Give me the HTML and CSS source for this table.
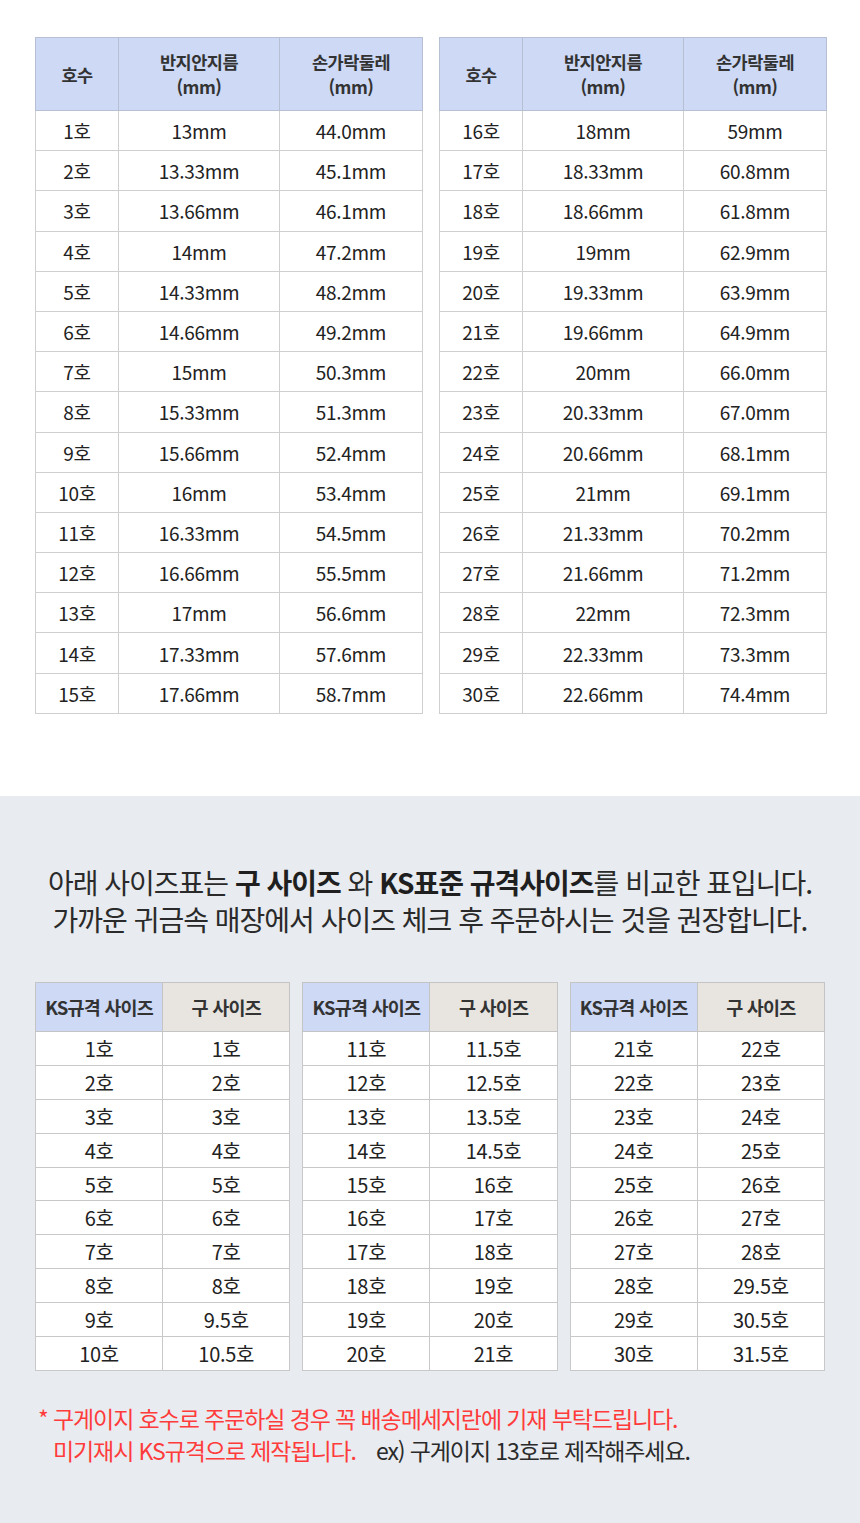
FILE: index.html
```html
<!DOCTYPE html>
<html lang="ko">
<head>
<meta charset="utf-8">
<link rel="stylesheet" href="styles.css">
</head>
<body>
<section class="top">
  <table class="size">
    <colgroup><col class="c1"><col class="c2"><col class="c3"></colgroup>
    <thead><tr><th>호수</th><th><span class="hl">반지안지름</span><span class="hl">(mm)</span></th><th><span class="hl">손가락둘레</span><span class="hl">(mm)</span></th></tr></thead>
    <tbody>
      <tr><td>1호</td><td>13mm</td><td>44.0mm</td></tr>
      <tr><td>2호</td><td>13.33mm</td><td>45.1mm</td></tr>
      <tr><td>3호</td><td>13.66mm</td><td>46.1mm</td></tr>
      <tr><td>4호</td><td>14mm</td><td>47.2mm</td></tr>
      <tr><td>5호</td><td>14.33mm</td><td>48.2mm</td></tr>
      <tr><td>6호</td><td>14.66mm</td><td>49.2mm</td></tr>
      <tr><td>7호</td><td>15mm</td><td>50.3mm</td></tr>
      <tr><td>8호</td><td>15.33mm</td><td>51.3mm</td></tr>
      <tr><td>9호</td><td>15.66mm</td><td>52.4mm</td></tr>
      <tr><td>10호</td><td>16mm</td><td>53.4mm</td></tr>
      <tr><td>11호</td><td>16.33mm</td><td>54.5mm</td></tr>
      <tr><td>12호</td><td>16.66mm</td><td>55.5mm</td></tr>
      <tr><td>13호</td><td>17mm</td><td>56.6mm</td></tr>
      <tr><td>14호</td><td>17.33mm</td><td>57.6mm</td></tr>
      <tr><td>15호</td><td>17.66mm</td><td>58.7mm</td></tr>
    </tbody>
  </table>
  <table class="size">
    <colgroup><col class="c1"><col class="c2"><col class="c3"></colgroup>
    <thead><tr><th>호수</th><th><span class="hl">반지안지름</span><span class="hl">(mm)</span></th><th><span class="hl">손가락둘레</span><span class="hl">(mm)</span></th></tr></thead>
    <tbody>
      <tr><td>16호</td><td>18mm</td><td>59mm</td></tr>
      <tr><td>17호</td><td>18.33mm</td><td>60.8mm</td></tr>
      <tr><td>18호</td><td>18.66mm</td><td>61.8mm</td></tr>
      <tr><td>19호</td><td>19mm</td><td>62.9mm</td></tr>
      <tr><td>20호</td><td>19.33mm</td><td>63.9mm</td></tr>
      <tr><td>21호</td><td>19.66mm</td><td>64.9mm</td></tr>
      <tr><td>22호</td><td>20mm</td><td>66.0mm</td></tr>
      <tr><td>23호</td><td>20.33mm</td><td>67.0mm</td></tr>
      <tr><td>24호</td><td>20.66mm</td><td>68.1mm</td></tr>
      <tr><td>25호</td><td>21mm</td><td>69.1mm</td></tr>
      <tr><td>26호</td><td>21.33mm</td><td>70.2mm</td></tr>
      <tr><td>27호</td><td>21.66mm</td><td>71.2mm</td></tr>
      <tr><td>28호</td><td>22mm</td><td>72.3mm</td></tr>
      <tr><td>29호</td><td>22.33mm</td><td>73.3mm</td></tr>
      <tr><td>30호</td><td>22.66mm</td><td>74.4mm</td></tr>
    </tbody>
  </table>
</section>

<section class="compare">
  <p class="intro">아래 사이즈표는 <b>구 사이즈</b> 와 <b>KS표준 규격사이즈</b>를 비교한 표입니다.<br>가까운 귀금속 매장에서 사이즈 체크 후 주문하시는 것을 권장합니다.</p>

  <div class="ks-tables">
    <table class="ks">
      <colgroup><col class="half"><col class="half"></colgroup>
      <thead><tr><th class="blue">KS규격 사이즈</th><th class="beige">구 사이즈</th></tr></thead>
      <tbody>
        <tr><td>1호</td><td>1호</td></tr>
        <tr><td>2호</td><td>2호</td></tr>
        <tr><td>3호</td><td>3호</td></tr>
        <tr><td>4호</td><td>4호</td></tr>
        <tr><td>5호</td><td>5호</td></tr>
        <tr><td>6호</td><td>6호</td></tr>
        <tr><td>7호</td><td>7호</td></tr>
        <tr><td>8호</td><td>8호</td></tr>
        <tr><td>9호</td><td>9.5호</td></tr>
        <tr><td>10호</td><td>10.5호</td></tr>
      </tbody>
    </table>
    <table class="ks">
      <colgroup><col class="half"><col class="half"></colgroup>
      <thead><tr><th class="blue">KS규격 사이즈</th><th class="beige">구 사이즈</th></tr></thead>
      <tbody>
        <tr><td>11호</td><td>11.5호</td></tr>
        <tr><td>12호</td><td>12.5호</td></tr>
        <tr><td>13호</td><td>13.5호</td></tr>
        <tr><td>14호</td><td>14.5호</td></tr>
        <tr><td>15호</td><td>16호</td></tr>
        <tr><td>16호</td><td>17호</td></tr>
        <tr><td>17호</td><td>18호</td></tr>
        <tr><td>18호</td><td>19호</td></tr>
        <tr><td>19호</td><td>20호</td></tr>
        <tr><td>20호</td><td>21호</td></tr>
      </tbody>
    </table>
    <table class="ks">
      <colgroup><col class="half"><col class="half"></colgroup>
      <thead><tr><th class="blue">KS규격 사이즈</th><th class="beige">구 사이즈</th></tr></thead>
      <tbody>
        <tr><td>21호</td><td>22호</td></tr>
        <tr><td>22호</td><td>23호</td></tr>
        <tr><td>23호</td><td>24호</td></tr>
        <tr><td>24호</td><td>25호</td></tr>
        <tr><td>25호</td><td>26호</td></tr>
        <tr><td>26호</td><td>27호</td></tr>
        <tr><td>27호</td><td>28호</td></tr>
        <tr><td>28호</td><td>29.5호</td></tr>
        <tr><td>29호</td><td>30.5호</td></tr>
        <tr><td>30호</td><td>31.5호</td></tr>
      </tbody>
    </table>
  </div>

  <div class="note">
    <p class="red">* 구게이지 호수로 주문하실 경우 꼭 배송메세지란에 기재 부탁드립니다.</p>
    <p class="second"><span class="red">미기재시 KS규격으로 제작됩니다.</span><span class="ex">ex) 구게이지 13호로 제작해주세요.</span></p>
  </div>
</section>
</body>
</html>
```

FILE: styles.css
```css
* { box-sizing: border-box; }
html, body {
  margin: 0;
  padding: 0;
  background: #ffffff;
  font-family: "Noto Sans CJK KR", "Noto Sans", sans-serif;
  color: #222;
}

.top {
  display: flex;
  gap: 16px;
  padding: 37px 35px 0 35px;
  height: 796px;
}

table {
  border-collapse: collapse;
  table-layout: fixed;
}

.size {
  width: 387px;
  height: 676px;
  align-self: flex-start;
}
.size .c1 { width: 83px; }
.size .c2 { width: 161px; }
.size .c3 { width: 143px; }

.size th {
  background: #cdd9f5;
  border: 1px solid #b7bfd3;
  height: 73px;
  font-size: 17.5px;
  font-weight: 700;
  line-height: 25px;
  color: #333;
  letter-spacing: -0.5px;
  padding: 0;
}
.size th .hl { display: block; }
.size td {
  border: 1px solid #cfcfcf;
  height: 40.2px;
  text-align: center;
  font-size: 19px;
  font-weight: 400;
  color: #222;
  letter-spacing: -0.3px;
  padding: 0;
}

.compare {
  background: #e8ebef;
  padding: 68px 35px 60px 35px;
}

.intro {
  margin: 0;
  text-align: center;
  font-size: 28px;
  line-height: 37px;
  color: #2a2a2a;
  letter-spacing: -1px;
}
.intro b { font-weight: 700; color: #1f1f1f; }

.ks-tables {
  display: flex;
  gap: 12px;
  margin-top: 44px;
}
.ks {
  flex: 1;
  background: #fff;
}
.ks .half { width: 50%; }
.ks th {
  height: 49px;
  font-size: 18.5px;
  font-weight: 700;
  color: #333;
  border: 1px solid #c4c4c4;
  letter-spacing: -0.8px;
  padding: 0;
}
.ks th.blue { background: #cdd9f5; }
.ks th.beige { background: #e8e5e0; }
.ks td {
  height: 33.9px;
  border: 1px solid #c8c8c8;
  text-align: center;
  font-size: 20px;
  color: #222;
  letter-spacing: -0.3px;
  padding: 0;
}

.note {
  margin-top: 31px;
  padding-left: 3px;
  font-size: 23px;
  line-height: 32px;
  letter-spacing: -1.1px;
}
.note p { margin: 0; }
.red { color: #ff3b3b; }
.second { padding-left: 15px; }
.ex { color: #2a2a2a; margin-left: 20px; }
```
